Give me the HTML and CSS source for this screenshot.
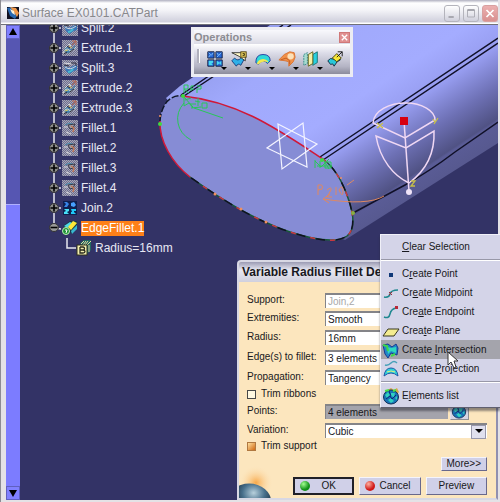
FILE: index.html
```html
<!DOCTYPE html>
<html lang="en">
<head>
    <meta charset="UTF-8">
    <meta name="viewport" content="width=device-width, initial-scale=1.0">
    <title>Surface EX0101.CATPart</title>
    <link rel="stylesheet" href="styles.css">
</head>
<body>
    <!-- shared icons -->
    <svg class="defs" width="0" height="0" aria-hidden="true">
        <defs>
            <symbol id="plus" viewBox="0 0 14 20">
                <path d="M6 0V20M6 10H13" stroke="#e8e8f0" stroke-width="1.5"/>
                <circle cx="6" cy="10" r="4.5" fill="#8c8c8c" stroke="#333"/>
                <path d="M6 6.5V13.5M2.5 10H9.5" stroke="#000" stroke-width="1.6"/>
            </symbol>
            <symbol id="minus" viewBox="0 0 14 20">
                <path d="M6 0V10M6 10L13 11" stroke="#e8e8f0" stroke-width="1.5"/>
                <ellipse cx="6" cy="9.5" rx="4.5" ry="4" fill="#999" stroke="#333"/>
                <path d="M2.5 9.5H9.5" stroke="#000" stroke-width="1.6"/>
            </symbol>
            <pattern id="dither" width="2" height="2" patternUnits="userSpaceOnUse">
                <rect width="2" height="2" fill="#6c6c92"/>
                <path d="M0 0h1v1h-1zM1 1h1v1h-1z" fill="#a8a8b4"/>
            </pattern>
            <symbol id="split" viewBox="0 0 16 16">
                <rect width="16" height="16" fill="url(#dither)"/>
                <path d="M2 5Q6 9 9 7T15 5V10Q11 11 9 13T4 11Z" fill="#3c78b8"/>
                <path d="M2 3L10 4M3 7Q8 11 14 6" fill="none" stroke="#dcdce0"/>
                <path d="M2 5L7 6M9 3H14V6" fill="none" stroke="#303040"/>
                <path d="M6 12Q9 12 11 9" fill="none" stroke="#48b8d0" stroke-width="2"/>
            </symbol>
            <symbol id="extrude" viewBox="0 0 16 16">
                <rect width="16" height="16" fill="url(#dither)"/>
                <path d="M2 11Q4 5 7 8T13 5L13 9Q11 8 9 11T4 13Z" fill="#4680a8"/>
                <path d="M1 13Q4 7 7 10T14 7M3 8L7 4L9 6" fill="none" stroke="#d8dcd8"/>
                <path d="M10 5L14 1M14 1V5M14 1H10" fill="none" stroke="#c06a50"/>
                <path d="M2 14L5 12M8 12L12 9M5 6L8 8" stroke="#282838"/>
                <path d="M7 6L10 8M3 11L6 10" stroke="#d8c860"/>
            </symbol>
            <symbol id="fillet" viewBox="0 0 16 16">
                <rect width="16" height="16" fill="url(#dither)"/>
                <path d="M3 5Q7 2 11 4L9 8" fill="none" stroke="#4888a8"/>
                <path d="M6 5L13 4L11 8L8 9Z" fill="#a0a0a8" stroke="#383848"/>
                <path d="M9 6L12 8L11 12" fill="none" stroke="#c07858" stroke-width="1.5"/>
                <path d="M2 7H6M4 12L9 14" stroke="#d8d8dc"/>
            </symbol>
            <symbol id="join" viewBox="0 0 16 16">
                <rect x="1" y="1" width="14" height="14" fill="#102050"/>
                <path d="M2 2H5L7 4L5 7H2L4 4Z" fill="#3884e8"/>
                <path d="M9 3L12 2L14 5L12 7L9 6Z" fill="#48a0ff"/>
                <path d="M2 9H7V11L5 12L7 14H2V12L4 11Z" fill="#48e0f8"/>
                <path d="M9 9H14V11H12V12L14 14H9V12H10Z" fill="#20c8f8"/>
            </symbol>
            <symbol id="edgefillet" viewBox="0 0 16 16">
                <path d="M1 6L8 1L15 1V7L9 14L7 10Z" fill="#183848"/>
                <path d="M2 6L8 2L10 3L6 8Z" fill="#50d8e8"/>
                <path d="M6 7L11 1L15 3L9 10Z" fill="#ffe838"/>
                <path d="M9 11L15 5V9L10 14Z" fill="#38b8d0"/>
                <circle cx="4" cy="11" r="3.5" fill="#209038" stroke="#b8f8b0"/>
                <path d="M3 10L5 10L4 13" fill="none" stroke="#fff"/>
            </symbol>
            <symbol id="param" viewBox="0 0 16 16">
                <path d="M4 3L8 0H15V10L11 14" fill="#206860"/>
                <path d="M5 4L8 1M7 5L10 1M9 5L12 1M11 5L15 1M13 5V12" stroke="#e8d8a0"/>
                <rect x="1" y="5" width="10" height="10" fill="#f4f0b0" stroke="#30301c"/>
                <path d="M4 7V13H7Q9 13 9 11.5Q9 10 7 10H4M7 10Q8.500 10 8.500 8.500T7 7H4" fill="none" stroke="#28281c" stroke-width="1.3"/>
            </symbol>
            <symbol id="globe" viewBox="0 0 18 18">
                <path d="M4 4L9 1L12 3L15 1L17 5L15 7Z" fill="#d8a848"/>
                <ellipse cx="9" cy="10" rx="7.5" ry="7" fill="#1874b8" stroke="#103058"/>
                <path d="M3 8L6 5L8 8L5 11ZM9 6L13 6L12 10L9 9ZM6 13L9 11L12 14L9 16ZM13 11L15 9V13Z" fill="#30d0c0"/>
                <path d="M4 12L8 9L10 12L14 8M7 4L9 9" fill="none" stroke="#0c2878"/>
                <path d="M3 4L7 3M11 4L14 3" stroke="#48e048" stroke-width="2"/>
            </symbol>
        </defs>
    </svg>

    <main class="window">
        <header class="titlebar">
            <svg class="app-icon" viewBox="0 0 12 12">
                <rect width="12" height="12" fill="#101020"/>
                <path d="M0 1L5 0L11 7L8 12L3 9Z" fill="#2868b0"/>
                <path d="M3 0L9 1L12 6L10 10L7 5Z" fill="#f09848"/>
                <path d="M3 2L7 4L8 8L5 6Z" fill="#fff4d8"/>
            </svg>
            <h1>Surface EX0101.CATPart</h1>
            <button class="win-btn" aria-label="Minimize"><svg viewBox="0 0 16 16"><path d="M4 12H10" stroke="#a0a0a8" stroke-width="2"/></svg></button>
            <button class="win-btn" aria-label="Maximize"><svg viewBox="0 0 16 16"><path d="M4 4H12V12H4Z" fill="none" stroke="#a8a8b0"/><path d="M4 4H12" stroke="#a0a0a8" stroke-width="2"/></svg></button>
            <button class="win-btn win-close" aria-label="Close"><svg viewBox="0 0 16 16"><path d="M4 4L12 12M12 4L4 12" stroke="#fff" stroke-width="2"/></svg></button>
        </header>

        <div class="workspace">
            <div class="scrollbar">
                <button class="scroll-btn" aria-label="Scroll up"><svg viewBox="0 0 8 8"><path d="M4 0L8 7H0Z"/></svg></button>
                <div class="scroll-track"><div class="scroll-thumb"></div></div>
                <button class="scroll-btn" aria-label="Scroll down"><svg viewBox="0 0 8 8"><path d="M4 8L8 1H0Z"/></svg></button>
            </div>

            <div class="viewport">
                <svg class="scene" viewBox="20 25 478 475" preserveAspectRatio="xMinYMin slice">
                    <defs>
                        <linearGradient id="body" gradientUnits="userSpaceOnUse" x1="93" y1="140" x2="216" y2="326">
                            <stop offset="0" stop-color="#959eee"/>
                            <stop offset=".18" stop-color="#a0a9fc"/>
                            <stop offset=".5" stop-color="#a4acff"/>
                            <stop offset=".65" stop-color="#979df0"/>
                            <stop offset=".8" stop-color="#6d70b4"/>
                            <stop offset=".92" stop-color="#505284"/>
                            <stop offset=".93" stop-color="#5a5c96"/>
                            <stop offset="1" stop-color="#575990"/>
                        </linearGradient>
                    </defs>
                    <path d="M166 98L180 86L270 25H498V143L345 240L250 200Z" fill="url(#body)"/>
                    <!-- end face -->
                    <path d="M183 96C240 102 280 131 323 159C335 168 343 183 348 198C353 212 356 229 347 236C337 243 318 241 290 232C255 220 225 202 190 177C172 163 159 141 160 121C161 106 169 94 183 96Z" fill="#868cd5"/>
                    <g fill="none">
                        <path d="M181 95L283 25M184 96L291 25M320 157L498 38M323 160L498 43M353 213L405 185Q430 171 455 152L498 122" stroke="#101028" stroke-width="1.5"/>
                        <path d="M183 96C240 102 280 131 323 159" stroke="#d01838" stroke-width="1.5"/>
                        <path d="M190 177C172 163 159 141 160 121" stroke="#d01838" stroke-width="1.5"/>
                        <path d="M323 159C335 168 343 183 348 198C353 212 356 229 347 236C337 243 318 241 290 232C255 220 225 202 190 177" stroke="#185838" stroke-width="1.5"/>
                        <path d="M323 159C335 168 343 183 348 198C353 212 356 229 347 236C337 243 318 241 290 232C255 220 225 202 190 177" stroke="#c83840" stroke-width="1.5" stroke-dasharray="5 15"/>
                        <path d="M323 159C335 168 343 183 348 198C353 212 356 229 347 236C337 243 318 241 290 232C255 220 225 202 190 177" stroke="#101020" stroke-width="1.5" stroke-dasharray="9 11" stroke-dashoffset="10"/>
                        <path d="M160 121C161 106 169 94 183 96" stroke="#101828" stroke-width="1.5" stroke-dasharray="7 2"/>
                        <!-- radius annotations -->
                        <g stroke="#28c858">
                            <path d="M184 103Q176 112 178 123T191 140M194 108L223 118M184 97L193 107M184 106V97M184 106L189 103L193 108M195 101L200 102M198 98V106M202 103V108H207V103H202"/>
                            <path d="M184 93V85H188V89H184L189 93M191 91V86H194M191 89H194M197 86H201V89H197V93M185 100L191 98M190 104H196M191 108L201 107"/>
                            <path d="M315 161L321 167L329 159M317 166H332M323 159L329 169M325 162H331V168H325ZM315 160V168M320 161V168"/>
                        </g>
                        <path d="M384 196Q368 206 323 199L330 194M323 199L329 203M318 185V195M318 185Q324 184 322 189L318 190M327 190Q332 186 331 190L327 197H332M336 187V195M339 190Q343 183 343 191T339 190M347 185L354 180" stroke="#e08860"/>
                        <path d="M278 124L317 144L282 169ZM303 123L307 167L267 148Z" stroke="#f4f4ff" stroke-width="1.2"/>
                        <!-- compass -->
                        <g stroke="#f0d8f4" stroke-width="1.5">
                            <path d="M373 123C374 110 390 103 406 103C422 103 435 111 435 120L405 138L373 123"/>
                            <path d="M376 136L406 148L434 131C435 155 424 172 409 183C394 176 380 160 376 136Z"/>
                            <path d="M404 121L409 191"/>
                        </g>
                        <path d="M377 123L383 128M383 123L377 128M433 119L435 122M438 118L434 124M411 181H415L411 186H415" stroke="#c8c048" stroke-width="1.3"/>
                    </g>
                    <rect x="400" y="117" width="8" height="8" fill="#d80010"/>
                    <circle cx="409" cy="192" r="3" fill="#f0e4f8"/>
                    <g fill="#40d840"><circle cx="160" cy="124" r="2"/><circle cx="183" cy="96" r="2"/><circle cx="322" cy="160" r="2"/></g>
                    <circle cx="353" cy="213" r="2" fill="#88b040"/>
                    <g fill="#f09060"><circle cx="160" cy="116" r="1"/><circle cx="215" cy="194" r="1.5"/><circle cx="241" cy="209" r="1.5"/><circle cx="266" cy="222" r="1.5"/><circle cx="341" cy="178" r="1"/></g>
                </svg>

                <ul class="tree">
                    <li><svg class="node"><use href="#plus"/></svg><svg class="icon"><use href="#split"/></svg><span>Split.2</span></li>
                    <li><svg class="node"><use href="#plus"/></svg><svg class="icon"><use href="#extrude"/></svg><span>Extrude.1</span></li>
                    <li><svg class="node"><use href="#plus"/></svg><svg class="icon"><use href="#split"/></svg><span>Split.3</span></li>
                    <li><svg class="node"><use href="#plus"/></svg><svg class="icon"><use href="#extrude"/></svg><span>Extrude.2</span></li>
                    <li><svg class="node"><use href="#plus"/></svg><svg class="icon"><use href="#extrude"/></svg><span>Extrude.3</span></li>
                    <li><svg class="node"><use href="#plus"/></svg><svg class="icon"><use href="#fillet"/></svg><span>Fillet.1</span></li>
                    <li><svg class="node"><use href="#plus"/></svg><svg class="icon"><use href="#fillet"/></svg><span>Fillet.2</span></li>
                    <li><svg class="node"><use href="#plus"/></svg><svg class="icon"><use href="#fillet"/></svg><span>Fillet.3</span></li>
                    <li><svg class="node"><use href="#plus"/></svg><svg class="icon"><use href="#fillet"/></svg><span>Fillet.4</span></li>
                    <li><svg class="node"><use href="#plus"/></svg><svg class="icon"><use href="#join"/></svg><span>Join.2</span></li>
                    <li><svg class="node"><use href="#minus"/></svg><svg class="icon"><use href="#edgefillet"/></svg><span class="selected">EdgeFillet.1</span></li>
                    <li class="child"><svg class="node" viewBox="0 0 14 20"><path d="M5 0V10H14" fill="none" stroke="#e8e8f0" stroke-width="1.5"/></svg><svg class="icon"><use href="#param"/></svg><span>Radius=16mm</span></li>
                </ul>
            </div>
        </div>

        <!-- Operations toolbar -->
        <section class="toolbar">
            <header>
                <h2>Operations</h2>
                <button class="toolbar-close" aria-label="Close toolbar"><svg viewBox="0 0 10 10"><path d="M2 2L8 8M8 2L2 8" stroke="#fff" stroke-width="1.5"/></svg></button>
            </header>
            <div class="tools">
                <button aria-label="Join"><svg viewBox="0 0 20 20">
                    <path d="M2 2H9V9H2ZM11 2H18V9H11ZM2 11H9V18H2ZM11 11H18V18H11Z" fill="#2868d8" stroke="#101838"/>
                    <path d="M3 12H8V14L6 15L8 17H3ZM12 12L15 14L17 12V17L15 15L12 17Z" fill="#48d8f0"/>
                    <path d="M3 8L5 5L3 3M8 3L6 6M12 3L14 6L17 3M12 8L14 6" fill="none" stroke="#80c0f8"/>
                </svg><i></i></button>
                <button aria-label="Split"><svg viewBox="0 0 20 20">
                    <path d="M5 9Q9 13 12 9T17 8L12 17Q9 14 7 18L2 12Z" fill="#30b0e8" stroke="#183878"/>
                    <path d="M2 3H14L17 6V12L10 7Z" fill="#fff8c8" stroke="#303030"/>
                    <rect x="12" y="2" width="6" height="6" fill="#e8d060" stroke="#504010"/>
                    <path d="M14 4H16V6H14" fill="none" stroke="#302808"/>
                </svg><i></i></button>
                <button aria-label="Boundary"><svg viewBox="0 0 20 20">
                    <path d="M2 14Q2 5 10 5T18 12L15 15Q10 9 5 16Z" fill="#30d8d8" stroke="#2038a0"/>
                    <path d="M3 15L5 12Q10 8 15 12L16 14Q10 11 5 16Z" fill="#f4e850"/>
                </svg><i></i></button>
                <button aria-label="Fillet"><svg viewBox="0 0 20 20">
                    <path d="M1 11L7 5L13 2L18 3L19 8L17 13L12 18L12 13L8 12Z" fill="#f09048" stroke="#d87030"/>
                    <path d="M3 11L9 9L13 12V16" fill="none" stroke="#c05820"/>
                    <circle cx="14" cy="7" r="3.5" fill="#fce0b8"/>
                </svg><i></i></button>
                <button aria-label="Translate"><svg viewBox="0 0 20 20">
                    <path d="M2 5L6 3V15L2 17Z" fill="#a8dcd0" stroke="#308888" stroke-dasharray="2 1"/>
                    <path d="M12 5L17 2V14L12 17Z" fill="#28d0e0" stroke="#187070"/>
                    <path d="M7 5L12 2V15L7 18Z" fill="#f4f0a8" stroke="#606018"/>
                </svg><i></i></button>
                <button aria-label="Extrapolate"><svg viewBox="0 0 20 20">
                    <path d="M2 12Q5 8 8 10T13 7L16 11Q12 12 9 18Q8 14 5 16Z" fill="#28c8d8" stroke="#102840"/>
                    <path d="M7 9L12 4L17 9L12 13Z" fill="#f8e838" stroke="#403808"/>
                    <path d="M12 8L18 2M13 2H18V7" fill="none" stroke="#101010"/>
                </svg></button>
            </div>
        </section>

        <!-- Variable radius fillet dialog -->
        <section class="dialog">
            <h2>Variable Radius Fillet De</h2>
            <form onsubmit="return false">
                <div class="row"><label for="support">Support:</label><input class="field" id="support" type="text" value="Join,2" disabled></div>
                <div class="row"><label for="extremities">Extremities:</label><span class="combo"><select class="field" id="extremities"><option>Smooth</option></select></span></div>
                <div class="row tall"><label for="radius">Radius:</label><input class="field" id="radius" type="text" value="16mm"></div>
                <div class="row tall"><label for="edges">Edge(s) to fillet:</label><input class="field" id="edges" type="text" value="3 elements"></div>
                <div class="row tall"><label for="propagation">Propagation:</label><span class="combo"><select class="field" id="propagation"><option>Tangency</option></select></span></div>
                <div class="check"><input type="checkbox" id="ribbons"><label for="ribbons">Trim ribbons</label></div>
                <div class="row tall"><label for="points">Points:</label><span class="picker"><input class="field active" id="points" type="text" value="4 elements"><button type="button" aria-label="Elements list"><svg><use href="#globe"/></svg></button></span></div>
                <div class="row"><label for="variation">Variation:</label><span class="combo"><select class="field" id="variation"><option>Cubic</option></select></span></div>
                <div class="check"><input type="checkbox" id="trim" checked><label for="trim">Trim support</label></div>
                <div class="more"><button type="button" class="push">More&gt;&gt;</button></div>
                <div class="actions">
                    <button class="push ok"><b class="led green"></b><span>OK</span></button>
                    <button type="button" class="push"><b class="led red"></b><span>Cancel</span></button>
                    <button type="button" class="push"><span>Preview</span></button>
                </div>
            </form>
            <svg class="planet" viewBox="0 0 40 40">
                <defs>
                    <radialGradient id="glow"><stop offset="0" stop-color="#f8a848"/><stop offset="1" stop-color="#fce4bc" stop-opacity="0"/></radialGradient>
                    <radialGradient id="sphere" cx=".6" cy=".25"><stop offset="0" stop-color="#b8d0dc"/><stop offset=".5" stop-color="#48708c"/><stop offset="1" stop-color="#182838"/></radialGradient>
                </defs>
                <circle cx="20" cy="22" r="20" fill="url(#glow)"/>
                <ellipse cx="12" cy="45" rx="26" ry="22" fill="url(#sphere)"/>
            </svg>
        </section>

        <!-- context menu -->
        <div class="menu" role="menu">
            <button role="menuitem"><svg></svg><span><u>C</u>lear Selection</span></button>
            <hr>
            <button role="menuitem"><svg viewBox="0 0 18 18"><rect x="7" y="8" width="4" height="4" fill="#103878"/></svg><span>C<u>r</u>eate Point</span></button>
            <button role="menuitem"><svg viewBox="0 0 18 18"><path d="M2 13Q7 14 8 10T16 6" fill="none" stroke="#208890" stroke-width="1.5"/><path d="M7 8L10 11M10 8L7 11" stroke="#a82838"/></svg><span>Cr<u>e</u>ate Midpoint</span></button>
            <button role="menuitem"><svg viewBox="0 0 18 18"><path d="M2 14Q7 16 8 11T14 5" fill="none" stroke="#208890" stroke-width="1.5"/><rect x="13" y="3" width="3" height="3" fill="#b82838"/></svg><span>Cre<u>a</u>te Endpoint</span></button>
            <button role="menuitem"><svg viewBox="0 0 18 18"><path d="M1 14L6 7H17L12 14Z" fill="#f4ec90" stroke="#383820"/></svg><span>Crea<u>t</u>e Plane</span></button>
            <button role="menuitem" class="hover"><svg viewBox="0 0 18 18"><path d="M1 4L6 3L10 6L14 3L16 7L15 14L9 12L6 17L3 13Z" fill="#2088c8" stroke="#183890"/><path d="M5 6L9 7L14 6V12L9 10L6 13Z" fill="#30d8c0"/><path d="M1 4L5 5L6 10M9 15L13 13" fill="none" stroke="#40d848" stroke-width="2"/></svg><span>Create <u>I</u>ntersection</span></button>
            <button role="menuitem"><svg viewBox="0 0 18 18"><path d="M3 5Q6 6 9 3T15 3" fill="none" stroke="#48a0b8" stroke-width="1.5"/><path d="M2 16Q3 8 9 8T16 16Q9 10 2 16Z" fill="#30d0d8" stroke="#2058a8"/><path d="M5 12Q9 10 13 12" fill="none" stroke="#e8f078"/></svg><span>Create <u>P</u>rojection</span></button>
            <hr>
            <button role="menuitem"><svg><use href="#globe"/></svg><span>E<u>l</u>ements list</span></button>
            <svg class="pointer" viewBox="0 0 12 19"><path d="M1 1V14L4 11L7 17L9 16L7 10H11Z" fill="#fff" stroke="#333"/></svg>
        </div>
    </main>
</body>
</html>
```
FILE: styles.css
```css
* {
    box-sizing: border-box;
}

body {
    margin: 0;
    font-family: "Liberation Sans", Arial, sans-serif;
    font-size: 10px;
    line-height: 14px;
    color: #181820;
}

button, input, select {
    font: inherit;
    color: inherit;
    margin: 0;
    padding: 0;
}

h1, h2 {
    margin: 0;
}

.defs {
    position: absolute;
}

.window {
    position: relative;
    display: flex;
    flex-direction: column;
    height: 100vh;
    padding: 0 2px 2px 5px;
    overflow: hidden;
    background: #e4e2e6;
    border-left: 1px solid #8c8c94;
}

/* title bar */
.titlebar {
    display: flex;
    align-items: center;
    gap: 3px;
    height: 25px;
    flex: none;
    margin-left: -5px;
    padding: 2px 0 0 6px;
    background: linear-gradient(#b0b0c0 0, #fff 3px, #f4f4f8 10px, #cfcfdc 22px, #fff 23px);
    border-bottom: 1px solid #707078;
}

.app-icon {
    width: 12px;
    height: 12px;
}

.titlebar h1 {
    flex: 1;
    font-size: 12px;
    font-weight: normal;
    color: #88888c;
}

.win-btn {
    width: 16px;
    height: 17px;
    border: 1px solid #b4b4bc;
    border-radius: 3px;
    background: linear-gradient(#fff, #d0d0dc);
}

.win-btn svg, .toolbar-close svg {
    display: block;
    width: 100%;
    height: 100%;
}

.win-close {
    background: linear-gradient(#ecb0b0, #d89090);
    border-color: #d8a0a0;
}

/* workspace */
.workspace {
    display: flex;
    flex: 1;
    min-height: 0;
}

.scrollbar {
    display: flex;
    flex-direction: column;
    width: 14px;
    background: #5656b2;
}

.scroll-btn {
    height: 14px;
    border: 1px solid #6060c0;
    background: #8080ff;
}

.scroll-btn svg {
    display: block;
    width: 8px;
    height: 8px;
    margin: auto;
}

.scroll-track {
    display: flex;
    flex: 1;
    align-items: flex-end;
}

.scroll-thumb {
    width: 100%;
    height: 63%;
    background: #7c7cff;
    border-top: 1px solid #b0b0ff;
}

.viewport {
    position: relative;
    flex: 1;
    overflow: hidden;
    background: #333366;
}

.scene {
    position: absolute;
    inset: 0;
    width: 100%;
    height: 100%;
}

/* specification tree, scrolled part of a row up */
.tree {
    position: relative;
    margin: -7px 0 0;
    padding: 0 0 0 28px;
    list-style: none;
    font-size: 12px;
    line-height: 15px;
    color: #e8e8f4;
}

.tree li {
    display: flex;
    align-items: center;
    height: 20px;
}

.tree .child {
    padding-left: 14px;
}

.node {
    width: 14px;
    height: 20px;
}

.icon {
    width: 16px;
    height: 16px;
    margin-right: 3px;
}

.selected {
    background: #ff8018;
    color: #fff;
}

/* toolbar */
.toolbar {
    position: absolute;
    left: 190px;
    top: 27px;
    width: 162px;
    padding: 3px;
    background: #ececf2;
}

.toolbar header {
    display: flex;
    align-items: center;
    justify-content: space-between;
    height: 14px;
    background: linear-gradient(#f8f8fc, #dcdce6);
}

.toolbar h2 {
    font-size: 11px;
    color: #8c8c92;
}

.toolbar-close {
    width: 11px;
    height: 11px;
    border: 1px solid #d07878;
    background: #e09090;
}

.tools {
    display: flex;
    align-items: center;
    gap: 4px;
    height: 30px;
    padding-left: 13px;
    background: linear-gradient(#fff 0, #dcdce8 30%, #b4b4c4 75%, #8c8c9c);
}

.tools::before {
    content: "";
    width: 2px;
    height: 14px;
    margin: 0 2px 6px -10px;
    background: #b0b0bc;
    border-right: 1px solid #fff;
}

.tools button {
    position: relative;
    width: 20px;
    height: 24px;
    border: 0;
    background: none;
}

.tools svg {
    display: block;
    width: 18px;
    height: 18px;
}

.tools i {
    position: absolute;
    right: -1px;
    bottom: 1px;
    border: 3px solid transparent;
    border-top-color: #000;
    border-bottom: 0;
}

/* dialog */
.dialog {
    position: absolute;
    left: 236px;
    right: 2px;
    top: 260px;
    bottom: 2px;
    overflow: hidden;
    border: 2px solid #d8d8e4;
    border-radius: 4px 4px 0 0;
    border-right-color: #9090b0;
    background: #fce6be;
}

.dialog h2 {
    height: 20px;
    padding-left: 3px;
    overflow: hidden;
    font-size: 12px;
    line-height: 20px;
    white-space: nowrap;
    background: linear-gradient(#9c9cb4, #e8e8f2 40%, #d0d0de);
}

.dialog form {
    position: relative;
    z-index: 1;
    padding: 9px 9px 0 8px;
}

.row {
    display: grid;
    grid-template-columns: 78px 1fr;
    align-items: center;
    height: 18px;
}

.tall {
    height: 20px;
}

.field {
    display: block;
    width: 100%;
    height: 15px;
    padding: 0 2px;
    border: 0;
    border-top: 2px solid #848488;
    border-left: 1px solid #848488;
    border-radius: 0;
    background: #fff;
    line-height: 13px;
    appearance: none;
}

.field:disabled {
    color: #a8a8a8;
    opacity: 1;
}

.active {
    background: #a4a4ac;
}

.combo {
    position: relative;
}

.combo::after {
    content: "";
    position: absolute;
    right: 1px;
    top: 2px;
    width: 13px;
    height: 12px;
    border: 1px solid #9898ac;
    background: #e0e0ee;
    pointer-events: none;
}

.combo::before {
    content: "";
    position: absolute;
    z-index: 1;
    right: 4px;
    top: 6px;
    border: 4px solid transparent;
    border-top-color: #000;
    border-bottom: 0;
    pointer-events: none;
}

.picker {
    display: flex;
    align-items: center;
    gap: 2px;
    padding-right: 18px;
}

.picker button {
    flex: none;
    width: 19px;
    height: 18px;
    border: 1px outset #e0e0e8;
    background: #d4d4e4;
}

.picker svg {
    display: block;
    width: 16px;
    height: 16px;
}

.check {
    display: flex;
    align-items: center;
    gap: 5px;
    height: 14px;
}

.check input {
    width: 9px;
    height: 9px;
    border: 1px solid #484848;
    background: #fff8e0;
    appearance: none;
}

.check input:checked {
    border-color: #b07840;
    background: linear-gradient(135deg, #ffe0a0, #d06810);
}

.push {
    display: flex;
    align-items: center;
    height: 18px;
    padding: 0 5px;
    border: 1px solid;
    border-color: #f4f4fc #68688c #68688c #f4f4fc;
    background: #d0d0e8;
}

.push span {
    flex: 1;
    text-align: center;
}

.more {
    display: flex;
    justify-content: flex-end;
    margin-top: 4px;
}

.more .push {
    height: 14px;
}

.actions {
    display: grid;
    grid-template-columns: repeat(3, 1fr);
    gap: 5px;
    margin: 6px 0 0 46px;
}

.ok {
    border: 2px solid #202028;
}

.led {
    width: 10px;
    height: 10px;
    border-radius: 50%;
}

.green {
    background: radial-gradient(circle at 35% 30%, #a0ff90, #109018 60%);
}

.red {
    background: radial-gradient(circle at 35% 30%, #ffb0a0, #d01818 60%);
}

.planet {
    position: absolute;
    left: 0;
    bottom: 0;
    width: 34px;
    height: 34px;
}

/* context menu */
.menu {
    position: absolute;
    z-index: 2;
    left: 379px;
    right: 0;
    top: 234px;
    padding: 2px 0;
    border: 1px solid #f0f0f8;
    border-right: 0;
    border-bottom-color: #606070;
    background: #d4d4e8;
    box-shadow: 0 3px 2px rgba(40, 40, 50, .5);
}

.menu button {
    display: flex;
    align-items: center;
    gap: 2px;
    width: 100%;
    height: 19px;
    padding-left: 1px;
    border: 0;
    background: none;
    white-space: nowrap;
}

.menu button svg {
    width: 18px;
    height: 18px;
    flex: none;
}

.menu .hover {
    background: #a4a4ac;
}

.menu hr {
    margin: 3px 0;
    border: 0;
    border-top: 1px solid #9898a8;
    border-bottom: 1px solid #fff;
}

.pointer {
    position: absolute;
    left: 66px;
    top: 116px;
    width: 12px;
    height: 19px;
}
```
